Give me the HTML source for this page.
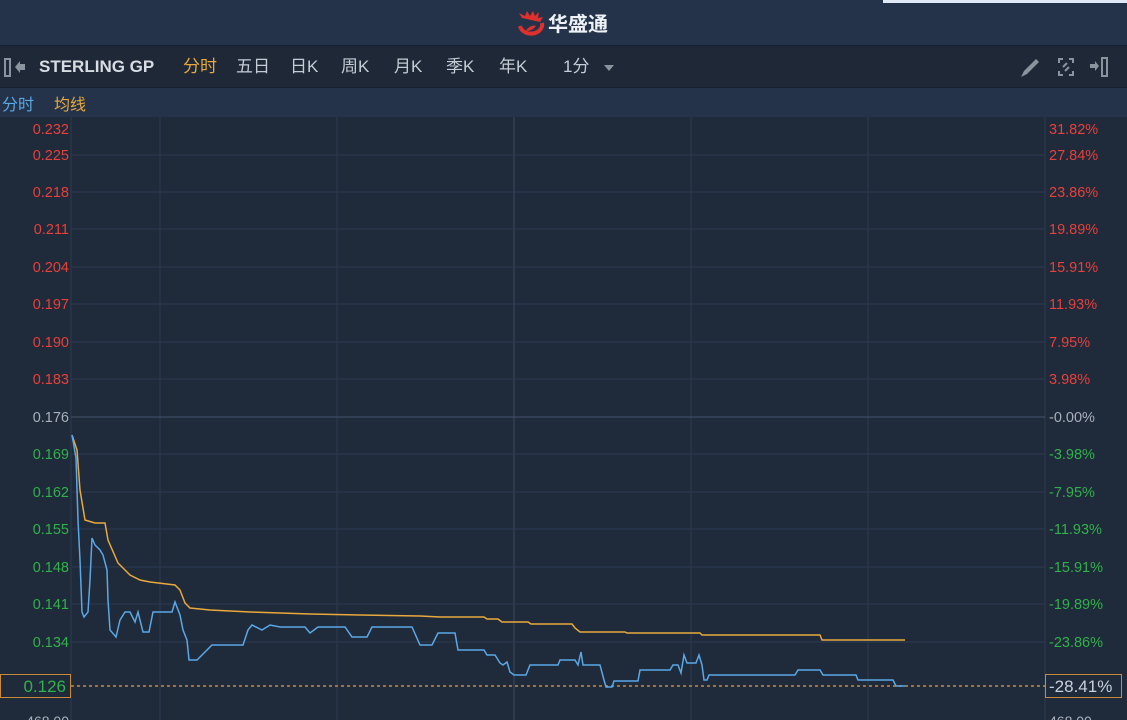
<!DOCTYPE html>
<html><head><meta charset="utf-8"><style>
*{margin:0;padding:0;box-sizing:border-box}
body{width:1127px;height:720px;overflow:hidden;background:#1f2a3a;font-family:"Liberation Sans","Noto Sans CJK SC",sans-serif;position:relative}
.top{position:absolute;left:0;top:0;width:1127px;height:45px;background:#24334a}
.wb{position:absolute;left:883px;top:0;width:244px;height:3px;background:#dfe9f7}
.tb{position:absolute;left:0;top:45px;width:1127px;height:43px;background:#1e2837;border-top:1px solid #172030;border-bottom:1px solid #172030}
.tb span{position:absolute;top:10px;height:22px;line-height:22px;font-size:17px;color:#c5ccd6}
.lg{position:absolute;left:0;top:88px;width:1127px;height:29px;background:#243349}
.lg span{position:absolute;top:3px;font-size:16px}
svg{position:absolute;left:0;top:0}
</style></head><body>
<div class="top"></div><div class="wb"></div>
<svg width="1127" height="45" viewBox="0 0 1127 45">
<path d="M520 26 a11 9 0 1 0 22 -3" fill="none" stroke="#e0302b" stroke-width="4"/>
<path d="M522 18 l-3 -5 l6 3 l2 -5 l3 5 l3 -5 l2 5 l4 -4 l-1 6 l5 -1 l-3 5" fill="#e0302b"/>
<path d="M526 30 q6 -6 10 -4 q-3 4 -8 5" fill="#e0302b"/>
<text x="548" y="31" font-size="20" font-weight="bold" fill="#eef2f6" font-family="Noto Sans CJK SC,sans-serif">华盛通</text>
</svg>
<div class="tb">
<span style="left:39px;font-weight:bold;color:#d8dde4">STERLING GP</span>
<span style="left:183px;color:#e9a93c">分时</span>
<span style="left:236px">五日</span>
<span style="left:290px">日K</span>
<span style="left:341px">周K</span>
<span style="left:394px">月K</span>
<span style="left:446px">季K</span>
<span style="left:499px">年K</span>
<span style="left:563px">1分</span>
<svg width="1127" height="43" viewBox="0 45 1127 43" style="top:-1px">
<rect x="5" y="59" width="5" height="17" fill="none" stroke="#8a939e" stroke-width="2"/>
<path d="M20 64 h5 v6 h-5 v3 l-5 -6 l5 -6 z" fill="#8a939e"/>
<path d="M604 65 h10 l-5 6 z" fill="#8a939e"/>
<path d="M1021 77 l3 -6 l12 -12 l3 3 l-12 12 z" fill="#8a939e"/>
<path d="M1059 63 v-4 h4 M1069 59 h4 v4 M1059 71 v4 h4 M1073 71 v4 h-4 M1063 67 l4 -4 M1065 71 l4 -4" stroke="#8a939e" stroke-width="2" fill="none"/>
<path d="M1090 64 h5 v-3 l4 5 l-4 5 v-3 h-5 z" fill="#8a939e"/><rect x="1102" y="58" width="5" height="18" fill="none" stroke="#8a939e" stroke-width="2"/>
</svg>
</div>
<div class="lg"><span style="left:2px;color:#5aa8e6">分时</span><span style="left:54px;color:#e9a93c">均线</span></div>
<svg width="1127" height="720" viewBox="0 0 1127 720" style="top:0">
<g stroke="#2c3a50" stroke-width="1">
<line x1="71" y1="117" x2="71" y2="720"/><line x1="1045" y1="117" x2="1045" y2="720"/>
<line x1="160" y1="117" x2="160" y2="720"/><line x1="337" y1="117" x2="337" y2="720"/><line x1="691" y1="117" x2="691" y2="720"/><line x1="868" y1="117" x2="868" y2="720"/>
<line x1="514" y1="117" x2="514" y2="720" stroke="#3a4a62"/>
<line x1="71" y1="155" x2="1045" y2="155"/><line x1="71" y1="192" x2="1045" y2="192"/><line x1="71" y1="229" x2="1045" y2="229"/><line x1="71" y1="267" x2="1045" y2="267"/><line x1="71" y1="304" x2="1045" y2="304"/><line x1="71" y1="342" x2="1045" y2="342"/><line x1="71" y1="379" x2="1045" y2="379"/>
<line x1="71" y1="417" x2="1045" y2="417" stroke="#44546c"/>
<line x1="71" y1="454" x2="1045" y2="454"/><line x1="71" y1="492" x2="1045" y2="492"/><line x1="71" y1="529" x2="1045" y2="529"/><line x1="71" y1="567" x2="1045" y2="567"/><line x1="71" y1="604" x2="1045" y2="604"/><line x1="71" y1="642" x2="1045" y2="642"/>
</g>
<line x1="71" y1="686" x2="1045" y2="686" stroke="#c98a3a" stroke-width="1.5" stroke-dasharray="3,3"/>
<g font-size="14.5" text-anchor="end">
<g fill="#e8403a"><text x="69" y="134">0.232</text><text x="69" y="160">0.225</text><text x="69" y="197">0.218</text><text x="69" y="234">0.211</text><text x="69" y="272">0.204</text><text x="69" y="309">0.197</text><text x="69" y="347">0.190</text><text x="69" y="384">0.183</text></g>
<text x="69" y="422" fill="#a8b0bc">0.176</text>
<g fill="#2fb24a"><text x="69" y="459">0.169</text><text x="69" y="497">0.162</text><text x="69" y="534">0.155</text><text x="69" y="572">0.148</text><text x="69" y="609">0.141</text><text x="69" y="647">0.134</text></g>
</g>
<g font-size="14.5">
<g fill="#e8403a"><text x="1049" y="134">31.82%</text><text x="1049" y="160">27.84%</text><text x="1049" y="197">23.86%</text><text x="1049" y="234">19.89%</text><text x="1049" y="272">15.91%</text><text x="1049" y="309">11.93%</text><text x="1049" y="347">7.95%</text><text x="1049" y="384">3.98%</text></g>
<text x="1049" y="422" fill="#a8b0bc">-0.00%</text>
<g fill="#2fb24a"><text x="1049" y="459">-3.98%</text><text x="1049" y="497">-7.95%</text><text x="1049" y="534">-11.93%</text><text x="1049" y="572">-15.91%</text><text x="1049" y="609">-19.89%</text><text x="1049" y="647">-23.86%</text></g>
</g>
<rect x="0.5" y="674.5" width="70" height="23" fill="#1f2a3a" stroke="#c98a3a"/>
<text x="66" y="692" font-size="17" fill="#2fb24a" text-anchor="end">0.126</text>
<rect x="1045.5" y="674.5" width="76" height="23" fill="#1f2a3a" stroke="#c98a3a"/>
<text x="1049" y="692" font-size="17" fill="#c8d0dc">-28.41%</text>
<text x="69" y="726" font-size="14" fill="#a8b0bc" text-anchor="end">468.00</text>
<text x="1049" y="726" font-size="14" fill="#a8b0bc">468.00</text>
<polyline fill="none" stroke="#e9a93c" stroke-width="1.5" points="72,435 77,450 80,490 85,520 95,523 105,523 108,540 118,563 130,575 140,580 150,582 175,585 180,590 185,603 190,608 210,610 250,612 310,614 360,615 420,616 440,617 484,617 487,619 498,619 502,622 528,622 531,624 572,624 575,628 580,632 625,632 627,633 700,633 702,635 820,635 822,640 905,640"/>
<polyline fill="none" stroke="#5aa8e6" stroke-width="1.5" points="72,435 76,458 78,520 80,560 82,612 84,617 88,612 90,580 92,538 95,545 100,550 103,555 107,570 108,600 110,630 116,637 120,620 125,612 130,612 135,622 138,612 143,632 149,632 153,612 172,612 175,602 180,615 183,630 187,640 189,660 197,660 205,652 212,645 243,645 248,630 252,625 262,630 270,625 280,627 305,627 310,633 318,627 345,627 352,637 367,637 372,627 412,627 420,645 432,645 438,633 455,633 458,650 484,650 487,655 495,655 500,663 503,665 507,662 510,672 514,675 526,675 530,665 558,665 560,660 575,660 578,665 581,652 583,665 600,665 604,680 606,687 612,687 614,681 638,681 640,670 670,670 673,665 678,665 681,673 684,655 687,663 696,663 699,655 702,665 704,680 707,680 709,675 795,675 798,670 820,670 823,675 856,675 858,680 893,680 896,686 905,686"/>
</svg>
</body></html>
